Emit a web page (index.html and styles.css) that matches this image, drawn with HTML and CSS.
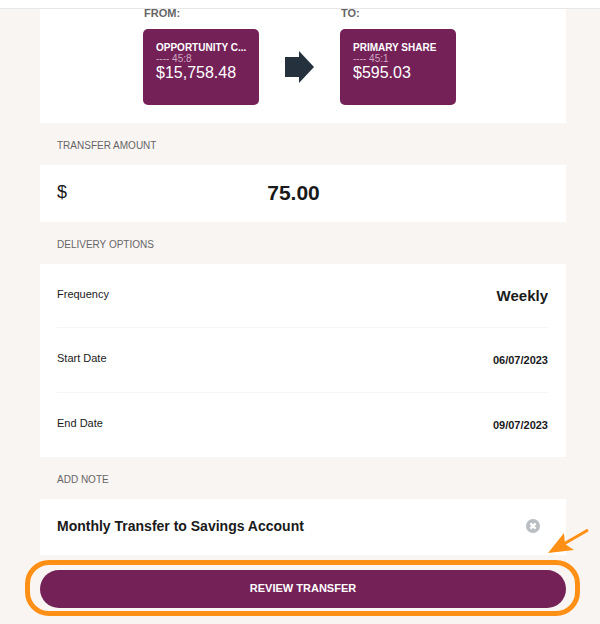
FILE: index.html
```
<!DOCTYPE html>
<html lang="en">
<head>
    <meta charset="UTF-8">
    <meta name="viewport" content="width=device-width, initial-scale=1.0">
    <title>Transfer</title>
    <link rel="stylesheet" href="styles.css">
</head>
<body>
    <header class="topbar"></header>
    <form class="transfer">
        <section class="panel accounts">
            <div class="account">
                <h2>FROM:</h2>
                <div class="account-card">
                    <div class="account-name">OPPORTUNITY C...</div>
                    <div class="account-number">---- 45:8</div>
                    <div class="account-balance">$15,758.48</div>
                </div>
            </div>
            <svg class="direction" width="29" height="32" viewBox="0 0 29 32" aria-hidden="true">
                <path d="M0 6h14V0l15 16-15 16v-6H0z" fill="#25323e"/>
            </svg>
            <div class="account">
                <h2>TO:</h2>
                <div class="account-card">
                    <div class="account-name">PRIMARY SHARE</div>
                    <div class="account-number">---- 45:1</div>
                    <div class="account-balance">$595.03</div>
                </div>
            </div>
        </section>

        <label class="section-title" for="amount">TRANSFER AMOUNT</label>
        <div class="panel amount">
            <span class="currency">$</span>
            <input type="text" id="amount" value="75.00">
        </div>

        <h3 class="section-title">DELIVERY OPTIONS</h3>
        <div class="panel options">
            <div class="option">
                <label for="frequency">Frequency</label>
                <select id="frequency" class="frequency">
                    <option>Weekly</option>
                </select>
            </div>
            <div class="option">
                <label for="startDate">Start Date</label>
                <input type="text" id="startDate" value="06/07/2023">
            </div>
            <div class="option">
                <label for="endDate">End Date</label>
                <input type="text" id="endDate" value="09/07/2023">
            </div>
        </div>

        <label class="section-title" for="note">ADD NOTE</label>
        <div class="panel note">
            <input type="text" id="note" value="Monthly Transfer to Savings Account">
            <button type="button" class="clear" aria-label="Clear note">
                <svg width="14" height="14" viewBox="0 0 14 14">
                    <circle cx="7" cy="7" r="7" fill="#b9bec2"/>
                    <path d="M4.4 4.4l5.2 5.2M9.6 4.4L4.4 9.6" stroke="#fff" stroke-width="2.4"/>
                </svg>
            </button>
        </div>

        <div class="submit">
            <button type="submit" class="review">REVIEW TRANSFER</button>
            <svg class="pointer" width="42" height="26" viewBox="0 0 42 26" aria-hidden="true">
                <path d="M40 2L14 17" stroke="#ff9015" stroke-width="3" fill="none"/>
                <path d="M0 25L16 5l1 11 9 6z" fill="#ff9015"/>
            </svg>
        </div>
    </form>
</body>
</html>
```

FILE: styles.css
```
* {
    box-sizing: border-box;
}

body {
    font-family: "Liberation Sans", Arial, sans-serif;
    margin: 0;
    background: #f9f5f3;
    color: #1a1a1a;
    font-size: 11px;
}

input, select, button {
    font-family: inherit;
    color: inherit;
    border: none;
    background: none;
    padding: 0;
    margin: 0;
    min-width: 0;
}

.topbar {
    height: 9px;
    background: #fff;
    border-bottom: 1px solid #e6e6e6;
}

.transfer {
    padding: 0 34px 16px 40px;
}

.panel {
    background: #fff;
    padding: 0 18px 0 17px;
}

.accounts {
    display: flex;
    justify-content: center;
    align-items: flex-end;
    gap: 26px;
    padding: 0 24px 18px 17px;
}

.account {
    width: 116px;
}

.account h2 {
    margin: 0 0 12px 1px;
    font-size: 11px;
    line-height: 8px;
    color: #666;
}

.account-card {
    height: 76px;
    padding: 13px 8px 10px 13px;
    background: #742158;
    border-radius: 5px;
    color: #fff;
}

.account-name {
    font-size: 10px;
    line-height: 12px;
    font-weight: bold;
    white-space: nowrap;
}

.account-number {
    font-size: 10px;
    line-height: 10px;
    color: #cfaac2;
}

.account-balance {
    font-size: 16px;
    line-height: 18px;
}

.direction {
    margin-bottom: 22px;
}

.section-title {
    display: block;
    margin: 0;
    padding: 4px 17px 0;
    font-size: 10px;
    line-height: 38px;
    font-weight: normal;
    color: #666;
}

.amount {
    display: flex;
    align-items: center;
    height: 57px;
    padding-right: 46px;
    padding-bottom: 2px;
}

.currency {
    font-size: 18px;
}

.amount input {
    flex: 1;
    font-size: 21px;
    font-weight: bold;
    text-align: center;
}

.option {
    display: flex;
    justify-content: space-between;
    align-items: center;
    height: 65px;
    padding-bottom: 4px;
    border-bottom: 1px solid #f5f5f5;
}

.option:first-child {
    height: 64px;
}

.option:last-child {
    height: 64px;
    border-bottom: none;
}

.option input, .option select {
    flex: 1;
    padding-top: 4px;
    font-size: 11px;
    font-weight: bold;
    text-align: right;
}

.option .frequency {
    appearance: none;
    font-size: 15px;
    text-align-last: right;
}

.note {
    display: flex;
    align-items: center;
    height: 56px;
    padding-right: 26px;
    padding-bottom: 2px;
}

.note input {
    flex: 1;
    font-size: 14px;
    font-weight: bold;
}

.clear {
    display: flex;
    cursor: pointer;
}

.submit {
    position: relative;
    margin: 5px -14px 0 -15px;
    padding: 5px 9px 3px 10px;
    border: 5px solid #ff9015;
    border-radius: 24px;
}

.review {
    width: 100%;
    height: 38px;
    padding-bottom: 2px;
    border-radius: 19px;
    background: #742158;
    color: #fff;
    font-size: 11px;
    font-weight: bold;
    cursor: pointer;
}

.pointer {
    position: absolute;
    right: -15px;
    top: -37px;
}
```
